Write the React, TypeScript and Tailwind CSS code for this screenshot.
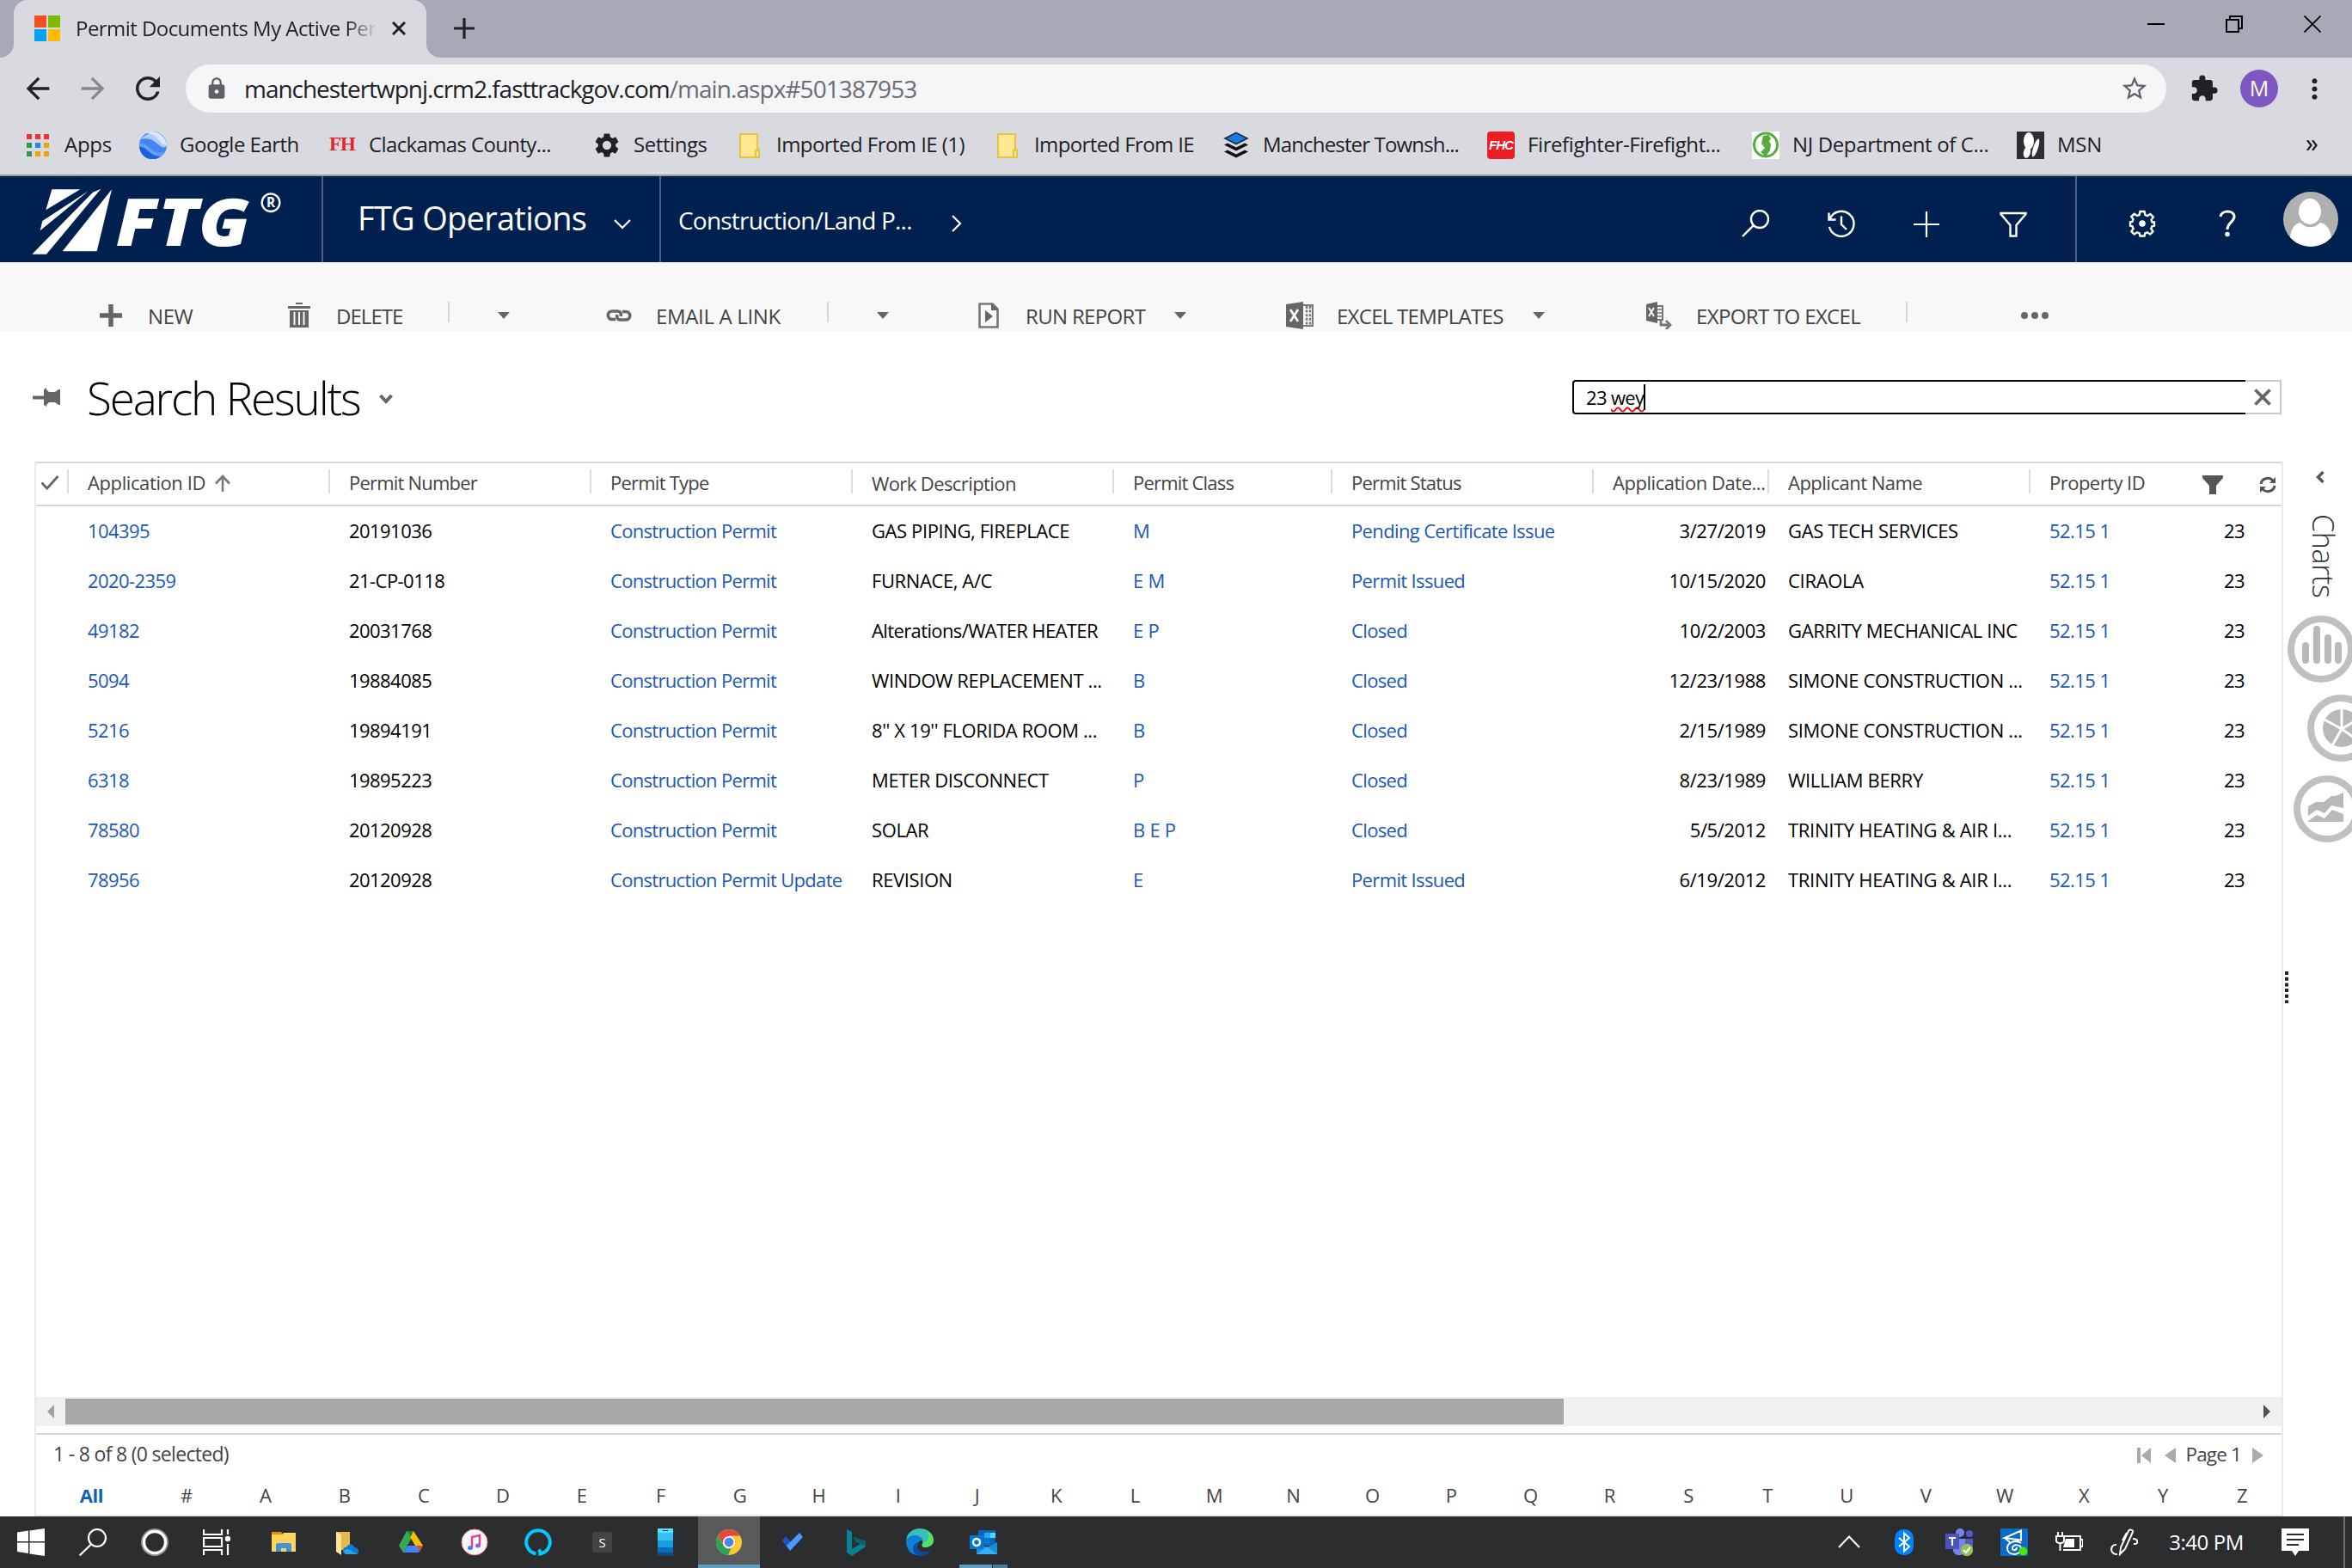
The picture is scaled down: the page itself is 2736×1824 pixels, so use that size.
import type { ReactNode } from 'react'
import {
  MdArrowBack,
  MdArrowForward,
  MdExtension,
  MdLock,
  MdMoreVert,
  MdRefresh,
  MdSettings,
  MdStarBorder,
} from 'react-icons/md'

const Folder = () => (
  <svg viewBox="0 0 32 32" className="h-8 w-8">
    <path d="M5 3h20v18h2v9H5z" fill="#ffe793" stroke="#e8c33e" strokeWidth="2" />
    <path d="M23 30v-8h4" fill="none" stroke="#e8c33e" strokeWidth="2" />
  </svg>
)

const AppsIcon = () => (
  <div className="grid h-[26px] w-[26px] grid-cols-3 gap-1 [&>i]:h-[6px] [&>i]:w-[6px]">
    <i className="bg-[#f4302f]" />
    <i className="bg-[#f4302f]" />
    <i className="bg-[#f4302f]" />
    <i className="bg-[#2b9b50]" />
    <i className="bg-[#1f87fb]" />
    <i className="bg-[#f0a30a]" />
    <i className="bg-[#2b9b50]" />
    <i className="bg-[#f0a30a]" />
    <i className="bg-[#f0a30a]" />
  </div>
)

const EarthIcon = () => (
  <svg viewBox="0 0 32 32" className="h-8 w-8">
    <circle cx="16" cy="16" r="16" fill="#4285f4" />
    <path d="M2 9C8 1 24-3 31 11c1 3 1 5 1 6C24 24 20 4 2 9z" fill="#aecbfa" />
    <path d="M8 2C17-3 29 2 32 15 25 18 22 2 8 2z" fill="#d9e8fd" />
    <path d="M0 14c10-4 14 16 30 9C24 36 2 35 0 14z" fill="#669df6" />
    <path d="M0 18c8-2 13 12 25 11C16 36 2 32 0 18z" fill="#1a62d8" />
  </svg>
)

const BufferIcon = () => (
  <svg viewBox="0 0 32 32" className="h-8 w-8">
    <path d="M16 1.500 29 8l-13 6.500L3 8z" fill="#1a7be0" stroke="#1d2b3a" strokeWidth="1.600" />
    <path d="M2 15.500l4-2 10 5 10-5 4 2-14 7z" fill="#111" />
    <path d="M2 23.500l4-2 10 5 10-5 4 2-14 7z" fill="#111" />
  </svg>
)

const NjIcon = () => (
  <svg viewBox="0 0 32 32" className="h-8 w-8">
    <path fill="#fff" d="M0 0h32v32H0z" />
    <circle cx="16" cy="15.500" r="13.500" fill="none" stroke="#54ac3c" strokeWidth="3" />
    <path d="M13 5l6-1 3 4-2 3 2 4-1 7-5 7-6-5 5-5-4-5z" fill="#54ac3c" />
  </svg>
)

const MsnIcon = () => (
  <svg viewBox="0 0 32 32" className="h-8 w-8">
    <path fill="#2b2e33" d="M0 0h32v32H0z" />
    <ellipse cx="14" cy="11" rx="6" ry="10" fill="#fff" />
    <ellipse cx="12" cy="24" rx="4" ry="7" transform="rotate(14 12 24)" fill="#fff" />
    <ellipse cx="22" cy="19" rx="2.800" ry="11" transform="rotate(18 22 19)" fill="#fff" />
  </svg>
)

const bookmarks: { label: string; icon: ReactNode; className: string }[] = [
  { label: 'Apps', icon: <AppsIcon />, className: 'w-[134px] tracking-[-0.012em]' },
  { label: 'Google Earth', icon: <EarthIcon />, className: 'w-[220px] tracking-[-0.021em]' },
  {
    label: 'Clackamas County...',
    icon: <b className="font-['Liberation_Serif',serif] text-[23px] tracking-[-0.04em] text-[#e2252b]">FH</b>,
    className: 'w-[308px] tracking-[-0.026em]',
  },
  { label: 'Settings', icon: <MdSettings className="h-[34px] w-[34px] shrink-0" />, className: 'w-[166px] tracking-[-0.018em]' },
  { label: 'Imported From IE (1)', icon: <Folder />, className: 'w-[300px] tracking-[-0.023em]' },
  { label: 'Imported From IE', icon: <Folder />, className: 'w-[266px] tracking-[-0.026em]' },
  { label: 'Manchester Townsh...', icon: <BufferIcon />, className: 'w-[308px] tracking-[-0.035em]' },
  {
    label: 'Firefighter-Firefight...',
    icon: (
      <span className="flex h-8 w-8 shrink-0 items-center justify-center rounded-sm bg-[#ee1c25] font-['Liberation_Sans',sans-serif] text-[15px] font-bold tracking-[-0.06em] text-white italic">
        FHC
      </span>
    ),
    className: 'w-[308px] tracking-[-0.017em]',
  },
  { label: 'NJ Department of C...', icon: <NjIcon />, className: 'w-[308px] tracking-[-0.015em]' },
  { label: 'MSN', icon: <MsnIcon />, className: 'w-[140px] tracking-[-0.012em]' },
]

const TabStrip = () => {
  return (
    <div className="flex h-[67px] items-stretch bg-[#a6aab6]">
      <div className="relative ml-4 flex w-[480px] items-center rounded-t-2xl bg-[#d9dae0] pb-[2px] pl-6">
        <svg viewBox="0 0 16 16" className="absolute bottom-0 -left-4 h-4 w-4">
          <path d="M16 0v16H0A16 16 0 0 0 16 0z" fill="#d9dae0" />
        </svg>
        <svg viewBox="0 0 16 16" className="absolute -right-4 bottom-0 h-4 w-4">
          <path d="M0 0v16h16A16 16 0 0 1 0 0z" fill="#d9dae0" />
        </svg>
        <div className="grid grid-cols-2 gap-[2px] [&>i]:h-[14px] [&>i]:w-[14px]">
          <i className="bg-[#f25022]" />
          <i className="bg-[#7fba00]" />
          <i className="bg-[#00a4ef]" />
          <i className="bg-[#ffb900]" />
        </div>
        <div className="ml-[18px] w-[351px] overflow-hidden bg-gradient-to-r from-[#1f2125] from-90% to-transparent to-100% bg-clip-text text-2xl tracking-[-0.023em] whitespace-nowrap text-transparent">
          Permit Documents My Active Permi
        </div>
        <svg viewBox="0 0 16 16" className="ml-[17px] h-4 w-4">
          <path d="M1 1l14 14M15 1L1 15" stroke="#1f2125" strokeWidth="3" />
        </svg>
      </div>
      <svg viewBox="0 0 24 24" className="mb-[2px] ml-8 h-6 w-6 self-center">
        <path d="M12 0v24M0 12h24" stroke="#1f2125" strokeWidth="3.200" />
      </svg>
      <div className="ml-auto flex h-14 items-center gap-[71px] pr-9">
        <svg viewBox="0 0 20 20" className="h-5 w-5">
          <path d="M0 10h20" stroke="#000" strokeWidth="2" />
        </svg>
        <svg viewBox="0 0 20 20" className="h-5 w-5">
          <path d="M1 5h14v14H1zM5 5V1h14v14h-4" fill="none" stroke="#000" strokeWidth="2" />
        </svg>
        <svg viewBox="0 0 20 20" className="h-5 w-5">
          <path d="M.5.5l19 19M19.500.5l-19 19" stroke="#000" strokeWidth="1.800" />
        </svg>
      </div>
    </div>
  )
}

const Toolbar = () => {
  return (
    <div className="flex h-[72px] items-center bg-[#d9dae0] pl-[24px] text-[#1f2125]">
      <MdArrowBack className="h-[40px] w-[40px]" />
      <MdArrowForward className="ml-6 h-[40px] w-[40px] text-[#86888f]" />
      <MdRefresh className="ml-[23px] h-[42px] w-[42px]" />
      <div className="ml-[23px] flex h-14 w-[2304px] items-center rounded-full bg-[#f5f6f8] pr-5 pl-[22px]">
        <MdLock className="h-7 w-7 text-[#5f6166]" />
        <span className="ml-[18px] text-[28px] tracking-[-0.037em]">manchestertwpnj.crm2.fasttrackgov.com</span>
        <span className="text-[28px] tracking-[-0.033em] text-[#6b6d72]">/main.aspx#501387953</span>
        <MdStarBorder className="ml-auto h-[34px] w-[34px] text-[#5f6166]" />
      </div>
      <MdExtension className="ml-[27px] h-[34px] w-[34px]" />
      <div className="ml-[25px] flex h-11 w-11 items-center justify-center rounded-full bg-[#7e57c2] text-[25px] text-white">M</div>
      <MdMoreVert className="ml-6 h-[37px] w-[37px]" />
    </div>
  )
}

const Bookmarks = () => {
  return (
    <div className="flex h-[66px] items-center border-b-2 border-[#9a9a9f] bg-[#d9dae0] pb-[5px] pl-7 text-2xl text-[#1f2125]">
      {bookmarks.map((b) => (
        <div key={b.label} className={`flex shrink-0 items-center gap-[15px] whitespace-nowrap ${b.className}`}>
          <span className="flex w-8 shrink-0 items-center justify-center">{b.icon}</span>
          <span className="pb-[2px]">{b.label}</span>
        </div>
      ))}
      <svg viewBox="0 0 13 12" className="ml-auto mr-[40px] h-3 w-[13px]">
        <path d="M1 0l4.500 6L1 12M7 0l4.500 6L7 12" fill="none" stroke="#1f2125" strokeWidth="2.300" />
      </svg>
    </div>
  )
}

const NavBar = () => {
  return (
    <header className="flex h-[100px] items-center bg-[#00204f] text-white">
      <div className="h-full w-[376px] border-r-2 border-[#4a5d83] pl-[30px]">
        <svg viewBox="0 0 930 300" className="h-[100px] w-[310px]" fill="#fff">
          <path d="M91 46h99L70 118zM218 52L50 190l8-34zM262 44L72 272H22l212-216zM300 46l-52 216H128z" />
          <text
            x="314"
            y="243"
            fontSize="231"
            fontWeight="800"
            fontStyle="italic"
            textLength="468"
            lengthAdjust="spacingAndGlyphs"
          >
            FTG
          </text>
          <circle cx="855" cy="92" r="31" fill="none" stroke="#fff" strokeWidth="7" />
          <text x="855" y="108" fontSize="46" fontWeight="700" textAnchor="middle">
            R
          </text>
        </svg>
      </div>
      <div className="flex h-full w-[393px] items-center border-r-2 border-[#4a5d83] pl-[40px]">
        <span className="pb-[3px] text-[38px] tracking-[-0.019em] whitespace-nowrap">FTG Operations</span>
        <svg viewBox="0 0 20 12" className="mt-[11px] ml-8 h-3 w-5">
          <path d="M1 1l9 9 9-9" fill="none" stroke="#fff" strokeWidth="2.200" />
        </svg>
      </div>
      <span className="ml-5 pb-px pt-[3px] text-[28px] tracking-[-0.028em] whitespace-nowrap">Construction/Land P...</span>
      <svg viewBox="0 0 12 20" className="mt-[10px] ml-[46px] h-5 w-3">
        <path d="M1 1l9 9-9 9" fill="none" stroke="#fff" strokeWidth="2.200" />
      </svg>
      <div className="ml-auto flex h-full items-center">
        <svg viewBox="0 0 32 32" className="mt-[10px] mr-[68px] h-8 w-8" fill="none" stroke="#fff" strokeWidth="2.400">
          <circle cx="21" cy="11" r="10" />
          <path d="M14 18L1 31" />
        </svg>
        <svg viewBox="0 0 32 32" className="mt-[10px] mr-[67px] h-8 w-8" fill="none" stroke="#fff" strokeWidth="2.400">
          <path d="M1.500 3.500v8h8M2.500 11A14.500 14.500 0 1 1 2 20M16 7.500V17l6 6" />
        </svg>
        <svg viewBox="0 0 32 32" className="mt-[12px] mr-[69px] h-8 w-8" fill="none" stroke="#fff" strokeWidth="2.200">
          <path d="M16 1v30M1 16h30" />
        </svg>
        <svg viewBox="0 0 32 32" className="mt-[12px] mr-[56px] h-8 w-8" fill="none" stroke="#fff" strokeWidth="2.400">
          <path d="M1.500 3h29v1L19.500 17v12.500h-7V17L1.500 4z" />
        </svg>
        <div className="h-full w-[2px] bg-[#4a5d83]" />
        <svg viewBox="0 0 32 32" className="mt-[10px] ml-[60px] h-8 w-8" fill="none" stroke="#fff" strokeWidth="2.400">
          <path d="M13.500 2h5l.8 4 2.700 1.100L25.400 5 28.800 8.500l-2.300 3.300L27.600 14.500H30v4l-2.600.8-1.100 2.700 2.200 3.300-3.300 3.200-3.200-2.200-2.700 1.100-.8 3.100h-5l-.8-3.200L10 26.300l-3.300 2.200-3.300-3.200L5.600 22l-1.100-2.700L2 18.500v-4l2.500-.8L5.500 11 3.300 8 6.700 4.800 10 7l2.700-1z" />
          <circle cx="16" cy="16" r="2.600" fill="#fff" />
        </svg>
        <svg viewBox="0 0 20 32" className="mt-[10px] ml-[73px] h-8 w-5" fill="none" stroke="#fff" strokeWidth="3">
          <path d="M2 8c1-8 16-8 16 0 0 6-8 7-8 15" />
          <circle cx="10" cy="28.500" r="1.300" />
        </svg>
        <svg viewBox="0 0 64 64" className="mr-4 ml-[55px] h-16 w-16">
          <circle cx="32" cy="32" r="32" fill="#b0b0b0" />
          <ellipse cx="31" cy="23" rx="13" ry="15" fill="#fff" />
          <path d="M8 53c1-9 5-16 12-17 6 7 17 7 23 0 7 1 12 8 13 17a32 32 0 0 1-48 0z" fill="#fff" />
        </svg>
      </div>
    </header>
  )
}

const Caret = ({ className }: { className: string }) => (
  <div className={`shrink-0 ${className}`}>
    <svg viewBox="0 0 14 8" className="h-2 w-[14px]">
      <path d="M0 0h14L7 8z" fill="#666" />
    </svg>
  </div>
)

const Divider = () => <div className="h-6 w-[2px] shrink-0 -translate-y-1 bg-[#d6d6d6]" />

const Command = ({ label, icon, className }: { label: string; icon: ReactNode; className: string }) => (
  <div className={`flex shrink-0 items-center whitespace-nowrap ${className}`}>
    <span className="mr-[27px] flex w-8 shrink-0 justify-center">{icon}</span>
    <span className="pt-px">{label}</span>
  </div>
)

const CommandBar = () => {
  return (
    <div className="flex h-20 items-center overflow-hidden bg-[#f8f8f8] pt-[45px] pb-[1px] pl-[113px] text-2xl text-[#444]">
      <Command
        label="NEW"
        className="w-[219px] tracking-[-0.018em]"
        icon={
          <svg viewBox="0 0 26 26" className="h-[26px] w-[26px]">
            <path d="M13 0v26M0 13h26" stroke="#666" strokeWidth="5.500" />
          </svg>
        }
      />
      <Command
        label="DELETE"
        className="w-[189px] tracking-[-0.04em]"
        icon={
          <svg viewBox="0 0 26 30" className="h-[30px] w-[26px]">
            <path d="M9 0h8v2H9zM0 4h26v3H0zM2 9h22v20H2z" fill="#666" />
            <path d="M7.500 11v15M13 11v15M18.500 11v15" stroke="#f8f8f8" strokeWidth="2" />
          </svg>
        }
      />
      <Divider />
      <Caret className="w-[181px] pl-[56px]" />
      <Command
        label="EMAIL A LINK"
        className="w-[258px] tracking-[-0.014em]"
        icon={
          <svg viewBox="0 0 30 14" className="h-[14px] w-[30px]" fill="none" stroke="#666" strokeWidth="3.600">
            <path d="M11 11.500H7a4.700 4.700 0 0 1 0-9.500h6c4 0 5 3 4 6" />
            <path d="M19 2.500h4a4.700 4.700 0 0 1 0 9.500h-6c-4 0-5-3-4-6" />
          </svg>
        }
      />
      <Divider />
      <Caret className="w-[170px] pl-[56px]" />
      <Command
        label="RUN REPORT"
        className="w-[232px] tracking-[-0.028em]"
        icon={
          <svg viewBox="0 0 24 30" className="h-[30px] w-6">
            <path d="M1.500 1.500h15l6 6v21h-21z" fill="none" stroke="#777" strokeWidth="2.600" />
            <path d="M15 1v8h8M8 9l9 7-9 7z" fill="#666" />
          </svg>
        }
      />
      <Caret className="w-[130px]" />
      <Command
        label="EXCEL TEMPLATES"
        className="w-[287px] tracking-[-0.03em]"
        icon={
          <svg viewBox="0 0 32 32" className="h-8 w-8">
            <path d="M19 4h12v24H19z" fill="#f8f8f8" stroke="#777" strokeWidth="2" />
            <path d="M24 5v22M28 5v22" stroke="#777" strokeWidth="2.500" strokeDasharray="3 1.600" />
            <path d="M0 3l20-3v32L0 29z" fill="#666" />
            <path d="M5 9l9 14M14 9L5 23" stroke="#f8f8f8" strokeWidth="2.800" />
          </svg>
        }
      />
      <Caret className="w-[131px]" />
      <Command
        label="EXPORT TO EXCEL"
        className="w-[303px] tracking-[-0.027em]"
        icon={
          <svg viewBox="0 0 32 32" className="h-8 w-8">
            <path d="M13 5h7v16h-7z" fill="#f8f8f8" stroke="#777" strokeWidth="2" />
            <path d="M13 9h7M13 13h7M13 17h7" stroke="#777" strokeWidth="1.600" />
            <path d="M1 3l13-3v25L1 22z" fill="#666" />
            <path d="M4 7l6 10M10 7L4 17" stroke="#f8f8f8" strokeWidth="2" />
            <path d="M18 21v6h10M24 22l5 5-5 5" fill="none" stroke="#777" strokeWidth="2.800" />
          </svg>
        }
      />
      <Divider />
      <svg viewBox="0 0 32 8" className="ml-[132px] h-2 w-8" fill="#666">
        <circle cx="4" cy="4" r="4" />
        <circle cx="16" cy="4" r="4" />
        <circle cx="28" cy="4" r="4" />
      </svg>
    </div>
  )
}

const ViewTitle = () => {
  return (
    <div className="flex h-[152px] items-center pt-[2px]">
      <svg viewBox="0 0 32 22" className="ml-[38px] h-[22px] w-8" fill="#666">
        <path d="M0 9.500h13V2l3-2v2l3 3h7l4-3h2v18h-2l-4-3h-7l-3 3v2l-3-2v-6.500H0z" />
      </svg>
      <h1 className="ml-[31px] pt-[2px] text-[53px] leading-[60px] font-light tracking-[-0.041em] whitespace-nowrap text-black">
        Search Results
      </h1>
      <svg viewBox="0 0 16 12" className="mt-[3px] ml-[22px] h-3 w-4">
        <path d="M1.500 2L8 9l6.500-7" fill="none" stroke="#666" strokeWidth="4" />
      </svg>
      <div className="mr-[82px] ml-auto flex h-10 w-[825px]">
        <div className="flex flex-1 items-center rounded-l border-2 border-r-0 border-black bg-white pl-[14px] text-[22px] tracking-[-0.03em] text-black">
          <span className="whitespace-pre">23 </span>
          <span className="underline decoration-[#f00] decoration-wavy decoration-[1.5px] underline-offset-[2px] [text-decoration-skip-ink:none]">
            wey
          </span>
          <span className="h-[30px] w-[2px] bg-black" />
        </div>
        <div className="flex w-[42px] items-center justify-center border-2 border-l-0 border-[#c8c8c8]">
          <svg viewBox="0 0 20 20" className="h-5 w-5">
            <path d="M1.500 1.500l17 17M18.500 1.500l-17 17" stroke="#666" strokeWidth="3.800" />
          </svg>
        </div>
      </div>
    </div>
  )
}

const columns = [
  { name: 'Permit Number', className: 'tracking-[-0.036em]' },
  { name: 'Permit Type', className: 'tracking-[-0.035em]' },
  { name: 'Work Description', className: 'pt-[2px] tracking-[-0.027em]' },
  { name: 'Permit Class', className: 'tracking-[-0.036em]' },
  { name: 'Permit Status', className: 'tracking-[-0.036em]' },
  { name: 'Application Date...', className: 'tracking-[-0.021em]' },
  { name: 'Applicant Name', className: 'tracking-[-0.023em]' },
  { name: 'Property ID', className: 'tracking-[-0.024em]' },
]

const rows = [
  ['104395', '20191036', 'Construction Permit', 'GAS PIPING, FIREPLACE', 'M', 'Pending Certificate Issue', '3/27/2019', 'GAS TECH SERVICES'],
  ['2020-2359', '21-CP-0118', 'Construction Permit', 'FURNACE, A/C', 'E M', 'Permit Issued', '10/15/2020', 'CIRAOLA'],
  ['49182', '20031768', 'Construction Permit', 'Alterations/WATER HEATER', 'E P', 'Closed', '10/2/2003', 'GARRITY MECHANICAL INC'],
  ['5094', '19884085', 'Construction Permit', 'WINDOW REPLACEMENT ...', 'B', 'Closed', '12/23/1988', 'SIMONE CONSTRUCTION ...'],
  ['5216', '19894191', 'Construction Permit', "8'' X 19'' FLORIDA ROOM ...", 'B', 'Closed', '2/15/1989', 'SIMONE CONSTRUCTION ...'],
  ['6318', '19895223', 'Construction Permit', 'METER DISCONNECT', 'P', 'Closed', '8/23/1989', 'WILLIAM BERRY'],
  ['78580', '20120928', 'Construction Permit', 'SOLAR', 'B E P', 'Closed', '5/5/2012', 'TRINITY HEATING & AIR I...'],
  ['78956', '20120928', 'Construction Permit Update', 'REVISION', 'E', 'Permit Issued', '6/19/2012', 'TRINITY HEATING & AIR I...'],
]

const gridCols =
  'grid grid-cols-[38px_304px_304px_304px_304px_254px_304px_204px_304px_226px_auto] whitespace-nowrap'

const ColumnLine = () => <span className="absolute top-[7px] right-0 h-7 w-[2px] bg-[#dcdcdc]" />

const GridHeader = () => {
  return (
    <div className={`${gridCols} h-[52px] border-y-2 border-[#d6d6d6] text-[22px] text-[#444] [&>div]:pb-[3px]`}>
      <div className="relative flex items-center justify-center pr-[6px]">
        <svg viewBox="0 0 22 18" className="h-[17px] w-[22px]">
          <path d="M1 9l6.500 7L21 1" fill="none" stroke="#666" strokeWidth="3" />
        </svg>
        <ColumnLine />
      </div>
      <div className="relative flex items-center pl-[22px] tracking-[-0.018em]">
        Application ID
        <svg viewBox="0 0 20 20" className="ml-[10px] h-5 w-5">
          <path d="M10 20V2M2 10.500L10 2l8 8.500" fill="none" stroke="#777" strokeWidth="2.600" />
        </svg>
        <ColumnLine />
      </div>
      {columns.map((c) => (
        <div key={c.name} className={`relative flex items-center pl-[22px] ${c.className}`}>
          {c.name}
          {c.name !== 'Property ID' && <ColumnLine />}
        </div>
      ))}
      <div className="-ml-10 flex items-center justify-end pt-[4px] pr-[6px]">
        <svg viewBox="0 0 24 22" className="mr-[42px] h-[22px] w-6" fill="#555">
          <path d="M0 0h24v3l-8 9v10H8V12L0 3z" />
        </svg>
        <svg viewBox="0 0 20 20" className="h-5 w-5" fill="none" stroke="#555" strokeWidth="3">
          <path d="M2 9a8 7.500 0 0 1 14-4M18 11a8 7.500 0 0 1-14 4" />
          <path d="M19 1v7h-7zM1 19v-7h7z" fill="#555" stroke="none" />
        </svg>
      </div>
    </div>
  )
}

const GridRows = () => {
  return (
    <div className="text-[22px] text-black">
      {rows.map(([id, number, type, work, permitClass, status, date, applicant]) => (
        <div key={id} className={`${gridCols} h-[58px] items-center pb-[2px] [&>.link]:text-[#1b58b7] [&>div]:pl-[22px]`}>
          <span />
          <div className="link tracking-[-0.027em]">{id}</div>
          <div className="tracking-[-0.025em]">{number}</div>
          <div className="link tracking-[-0.031em]">{type}</div>
          <div className={/[a-z]/.test(work) ? 'tracking-[-0.028em]' : 'tracking-[-0.018em]'}>{work}</div>
          <div className="link tracking-[-0.012em]">{permitClass}</div>
          <div className="link tracking-[-0.029em]">{status}</div>
          <div className="pr-1 text-right tracking-[-0.019em]">{date}</div>
          <div className="tracking-[-0.014em]">{applicant}</div>
          <div className="link tracking-[-0.025em]">52.15 1</div>
          <span className="-ml-px tracking-[-0.025em]">23</span>
        </div>
      ))}
    </div>
  )
}

const letters = '#ABCDEFGHIJKLMNOPQRSTUVWXYZ'.split('')

const GridFooter = () => {
  return (
    <div className="mt-2 flex h-[95px] flex-col border-t-2 border-[#d6d6d6] text-[#444]">
      <div className="flex h-[46px] items-center pl-[20px]">
        <span className="text-[23px] tracking-[-0.03em]">1 - 8 of 8 (0 selected)</span>
        <svg viewBox="0 0 46 18" className="mt-1 ml-auto h-[18px] w-[46px]" fill="#aaa">
          <path d="M0 0h4v18H0zM16 0v18L5 9zM45 0v18L32 9z" />
        </svg>
        <span className="ml-[11px] text-[22.5px] tracking-[-0.038em]">Page 1</span>
        <svg viewBox="0 0 13 18" className="mt-1 mr-[21px] ml-[13px] h-[18px] w-[13px]" fill="#aaa">
          <path d="M0 0v18l13-9z" />
        </svg>
      </div>
      <div className="flex h-[49px] items-center pt-[4px] text-[22px]">
        <span className="w-[129px] text-center font-bold tracking-[-0.02em] text-[#1160b7]">All</span>
        {letters.map((l) => (
          <span key={l} className="flex-1 text-center">
            {l}
          </span>
        ))}
      </div>
    </div>
  )
}

const ChartsPane = () => {
  return (
    <aside className="relative flex-1 overflow-hidden">
      <svg viewBox="0 0 10 14" className="absolute top-[11px] left-[38px] h-[14px] w-[10px]">
        <path d="M8.500 1L2.500 7l6 6" fill="none" stroke="#555" strokeWidth="3.400" />
      </svg>
      <span className="absolute top-[61px] left-[23px] text-[34px] leading-[48px] font-light tracking-[-0.01em] text-[#333] [writing-mode:vertical-rl]">
        Charts
      </span>
      <svg viewBox="0 0 80 80" className="absolute top-[178px] left-[4px] h-20 w-20">
        <circle cx="40" cy="40" r="35" fill="#fff" stroke="#c0c0c0" strokeWidth="8" />
        <path d="M22 36v17M35 17v36M48 27v26M60 36v17" stroke="#b8b8b8" strokeWidth="8" strokeLinecap="round" />
      </svg>
      <svg viewBox="0 0 80 80" className="absolute top-[270px] left-[27px] h-20 w-20">
        <circle cx="40" cy="40" r="35" fill="#fff" stroke="#c0c0c0" strokeWidth="8" />
        <circle cx="41" cy="40" r="22" fill="#b8b8b8" />
        <path d="M41 41V17M41 41L19 29M41 41L29 62M41 41l20 14M41 41l20-12" stroke="#fff" strokeWidth="3" />
      </svg>
      <svg viewBox="0 0 80 80" className="absolute top-[364px] left-[11px] h-20 w-20">
        <circle cx="40" cy="40" r="35" fill="#fff" stroke="#c0c0c0" strokeWidth="8" />
        <path d="M18 37l9-5h9l9-7h5l9-4v18l-14-3-8 9-9-4-10 7z" fill="#b8b8b8" />
        <path d="M18 54l10-7 9 4 9-10 13 5v9H18z" fill="#b8b8b8" />
      </svg>
      <svg viewBox="0 0 4 38" className="absolute top-[592px] left-[2px] h-[38px] w-1">
        <path d="M2 1v38" stroke="#222" strokeWidth="4" strokeDasharray="4 2.700" />
      </svg>
    </aside>
  )
}

const TaskIcon = ({ children }: { children: ReactNode }) => (
  <div className="flex w-[74px] shrink-0 items-center justify-center">
    <svg viewBox="0 0 32 32" className="h-8 w-8">
      {children}
    </svg>
  </div>
)

const TrayIcon = ({ children }: { children: ReactNode }) => (
  <div className="flex w-16 shrink-0 items-center justify-center">
    <svg viewBox="0 0 32 32" className="h-8 w-8">
      {children}
    </svg>
  </div>
)

const Taskbar = () => {
  return (
    <footer className="flex h-[60px] bg-[#2c2d2f] text-white">
      <div className="mr-[5px] flex [&>div]:w-[72px]">
        <TaskIcon>
          <path d="M0 4.500L13 2.600V15H0zM14.500 2.400L32 0v15H14.500zM0 16.500h13v12.400L0 27zM14.500 16.500H32V32l-17.500-2.500z" fill="#fff" />
        </TaskIcon>
        <TaskIcon>
          <circle cx="21" cy="11" r="10" fill="none" stroke="#fff" strokeWidth="2.200" />
          <path d="M14 18.500L.5 31.500" stroke="#fff" strokeWidth="2.200" />
        </TaskIcon>
        <TaskIcon>
          <circle cx="16" cy="16" r="14.500" fill="none" stroke="#8f9091" strokeWidth="3" />
          <circle cx="16" cy="16" r="12.500" fill="none" stroke="#fff" strokeWidth="3.400" />
        </TaskIcon>
        <TaskIcon>
          <path d="M1 1v6h21V1M1 31v-6h21v6M1 11h21v10H1zM29 1v6M29 18v13" fill="none" stroke="#fff" strokeWidth="2.200" />
          <circle cx="29" cy="12" r="3.200" fill="#fff" />
        </TaskIcon>
      </div>
      <TaskIcon>
        <path d="M2 4h11l2 3H2z" fill="#d99500" />
        <path d="M2 7h12l2-2h14v22H2z" fill="#ffd35c" />
        <path d="M7 27V18l2-1h14l2 1v9h-6v-4h-6v4z" fill="#3d94dc" />
      </TaskIcon>
      <TaskIcon>
        <path d="M3 4h16v21H3z" fill="#e6b94b" />
        <path d="M3 4l6 3v24l-6-4z" fill="#ffe59c" />
        <path d="M12 29c-3-4 1-8 3-7 2-5 8-5 9 0 6 0 7 8 2 8H14z" fill="#0f7ad6" />
        <path d="M12 26c4-5 8 0 16 4H14z" fill="#2ba3ec" />
      </TaskIcon>
      <TaskIcon>
        <path d="M11 3L2 20l5 8L17 11z" fill="#34a853" />
        <path d="M11 3h8l11 17h-9z" fill="#fbbc04" />
        <path d="M7 28l5-8h18l-5 8z" fill="#4285f4" />
        <path d="M23 20h7l-4 7z" fill="#ea4335" />
        <path d="M11 3h8l-3.500 7z" fill="#188038" />
      </TaskIcon>
      <TaskIcon>
        <circle cx="16" cy="16" r="15" fill="#f7f5fb" stroke="#f08aa0" strokeWidth="1" />
        <path d="M13 22V10l9-2v11" fill="none" stroke="#e8467c" strokeWidth="2.400" />
        <ellipse cx="11" cy="22.500" rx="3" ry="2.500" fill="#4a7cf0" />
        <ellipse cx="20" cy="20" rx="3" ry="2.500" fill="#9c5be0" />
      </TaskIcon>
      <TaskIcon>
        <path d="M13.500 29.500a13.800 13.800 0 1 1 5 0c0-3-1-4-1.500-5" fill="none" stroke="#00caff" strokeWidth="4" />
      </TaskIcon>
      <TaskIcon>
        <rect x="5" y="4" width="23" height="24" rx="3" fill="#444" />
        <text x="16.500" y="22" fontSize="15" textAnchor="middle" fill="#fff">
          S
        </text>
      </TaskIcon>
      <TaskIcon>
        <path d="M7 0h18v8H7z" fill="#50e6ff" />
        <path d="M7 5h18v9H7z" fill="#35c1f1" />
        <path d="M7 14h18v8H7z" fill="#1a9de0" />
        <path d="M7 22h18v6H7z" fill="#0b6cbd" />
        <path d="M7 28h18v4H7z" fill="#124a86" />
        <path d="M13 2.500h6" stroke="#126" strokeWidth="1" />
      </TaskIcon>
      {/* running app: highlighted with an underline */}
      <div className="mx-px flex w-[72px] items-center justify-center border-b-4 border-[#5f9cbf] bg-[#58595b] pt-1">
        <svg viewBox="0 0 32 32" className="h-8 w-8">
          <circle cx="16" cy="16" r="15" fill="#fbc92d" />
          <path d="M3 8.500A15 15 0 0 1 29 8.500H16L9.500 19z" fill="#e04a3b" />
          <path d="M3 8.500L9.600 20a7.500 7.500 0 0 0 9 3L15 31A15 15 0 0 1 3 8.500z" fill="#2ba35a" />
          <circle cx="16" cy="16" r="7" fill="#fff" />
          <circle cx="16" cy="16" r="5.400" fill="#4b86ee" />
        </svg>
      </div>
      <TaskIcon>
        <path d="M4 14l4-5 7 8-4 7z" fill="#1d56c8" />
        <path d="M9 20L24 5l4 5-15 16z" fill="#4a9bff" />
      </TaskIcon>
      <TaskIcon>
        <path d="M5 1l6 3v20l10-6-5-2-3-6 14 5v6L11 32l-6-4z" fill="#048297" />
        <path d="M13 10l14 5v6l-6-3-5-2z" fill="#0b5f72" />
      </TaskIcon>
      <TaskIcon>
        <path d="M16 0c9 0 16 6 16 13 0 6-5 9-10 9-3 0-4-2-3-4 3-9-14-13-19-4C1 5 8 0 16 0z" fill="#35c3b8" />
        <path d="M25 3c5 3 7 8 7 11 0 5-5 8-10 8-3 0-4-2-3-4 8-2 8-9 6-15z" fill="#5be05a" />
        <path d="M0 15C2 6 17 6 19 14c-6-1-9 10-2 17C7 33 0 25 0 15z" fill="#0c7fdb" />
        <path d="M14 16c-6 8 6 15 15 9-3 5-8 7-12 7-10 0-12-13-3-16z" fill="#0c4a9a" />
      </TaskIcon>
      <div className="relative flex w-[74px] items-center justify-center">
        <svg viewBox="0 0 32 32" className="h-8 w-8">
          <path d="M10 2h20v18H10z" fill="#0a64b8" />
          <path d="M17 5h7v6h-7z" fill="#28a8ea" />
          <path d="M24 5h6v6h-6z" fill="#50d9ff" />
          <path d="M17 11h7v7h-7z" fill="#0078d4" />
          <path d="M8 17l12 5 12-6v14H8z" fill="#1b8bdc" />
          <path d="M8 30l12-9 12 9z" fill="#35b0f5" />
          <path d="M0 8h16v16H0z" fill="#0078d4" />
          <circle cx="8" cy="16" r="4" fill="none" stroke="#fff" strokeWidth="2.400" />
        </svg>
        <div className="absolute bottom-0 left-[9px] flex h-1 gap-px">
          <i className="w-[38px] bg-[#5f9cbf]" />
          <i className="w-[17px] bg-[#4b7d96]" />
        </div>
      </div>

      <div className="ml-auto flex items-stretch">
        <TrayIcon>
          <path d="M4 22L16 9.500 28 22" fill="none" stroke="#fff" strokeWidth="2" />
        </TrayIcon>
        <TrayIcon>
          <rect x="5" y="1" width="22" height="30" rx="10" fill="#0082fc" />
          <path d="M10 11l12 10-6 5.500v-21L22 11 10 21" fill="none" stroke="#fff" strokeWidth="2" />
        </TrayIcon>
        <TrayIcon>
          <circle cx="17" cy="5" r="5" fill="#7b83eb" />
          <circle cx="28" cy="6" r="4" fill="#5059c9" />
          <path d="M18 12h14v8c0 4-4 6-6 6z" fill="#5059c9" />
          <path d="M9 12h14v13c0 8-14 8-14 0z" fill="#7b83eb" />
          <path d="M0 6h16v18H0z" fill="#4b53bc" />
          <path d="M4 11h8M8 11v9" stroke="#fff" strokeWidth="2.200" />
          <circle cx="25" cy="25" r="7.200" fill="#92c353" />
          <path d="M21 25l3 3 5-6" fill="none" stroke="#fff" strokeWidth="2" />
        </TrayIcon>
        <TrayIcon>
          <path d="M0 0h32v32H0z" fill="#0a6cc8" />
          <path
            d="M5 11L24 2.500v11zM5 11l6 5M24 17c-7-5-16 0-16 6 0 9 15 9 16 1 0-6-10-6-10-1 0 3 5 3 5-1"
            fill="none"
            stroke="#fff"
            strokeWidth="2"
          />
          <circle cx="26.500" cy="26.500" r="5" fill="#49e800" />
        </TrayIcon>
        <TrayIcon>
          <path d="M9 9h20v16H9M29 13h3v8h-3" fill="none" stroke="#fff" strokeWidth="2" />
          <path d="M12 12h10v10H9z" fill="#fff" />
          <path d="M1 9h9v5c0 4-9 4-9 0zM3 9V4M8 9V4M5.500 17v9" fill="none" stroke="#fff" strokeWidth="2" />
        </TrayIcon>
        <TrayIcon>
          <path
            d="M11 30l1-8L21 3c1-3 6-1 5 1l-9 20zM14 14l5-9M7 19c-8-1-8 12 1 11M26 12c7 0 7 7 1 6"
            fill="none"
            stroke="#fff"
            strokeWidth="2"
          />
        </TrayIcon>
        <span className="flex w-[127px] items-center justify-center text-2xl tracking-[-0.018em]">3:40 PM</span>
        <div className="flex w-20 items-center justify-center">
          <svg viewBox="0 0 32 32" className="h-8 w-8">
            <path d="M0 0h32v26H20l-4 6-4-6H0z" fill="#fff" />
            <path d="M6 7h20M6 13h20M6 19h14" stroke="#2c2d2f" strokeWidth="2" />
          </svg>
        </div>
        <i className="mr-2 ml-4 w-[2px] bg-[#707173]" />
      </div>
    </footer>
  )
}

const App = () => {
  return (
    <div className="flex h-[1824px] w-[2736px] flex-col overflow-hidden bg-white font-['Open_Sans','Noto_Sans',sans-serif]">
      <TabStrip />
      <Toolbar />
      <Bookmarks />
      <NavBar />
      <CommandBar />
      <ViewTitle />
      <div className="flex min-h-0 flex-1">
        <div className="ml-10 flex w-[2616px] flex-col border-x-2 border-b-2 border-[#e9e9e9]">
          <GridHeader />
          <GridRows />
          <div className="mt-auto flex h-[34px] items-center bg-[#f0f0f0]">
            <svg viewBox="0 0 8 16" className="ml-[13px] h-4 w-2">
              <path d="M8 0v16L0 8z" fill="#a0a0a0" />
            </svg>
            <div className="ml-[13px] h-[30px] w-[1743px] bg-[#a8a8a8]" />
            <svg viewBox="0 0 8 16" className="mr-[13px] ml-auto h-4 w-2">
              <path d="M0 0v16l8-8z" fill="#505050" />
            </svg>
          </div>
          <GridFooter />
        </div>
        <ChartsPane />
      </div>
      <Taskbar />
    </div>
  )
}

export default App
